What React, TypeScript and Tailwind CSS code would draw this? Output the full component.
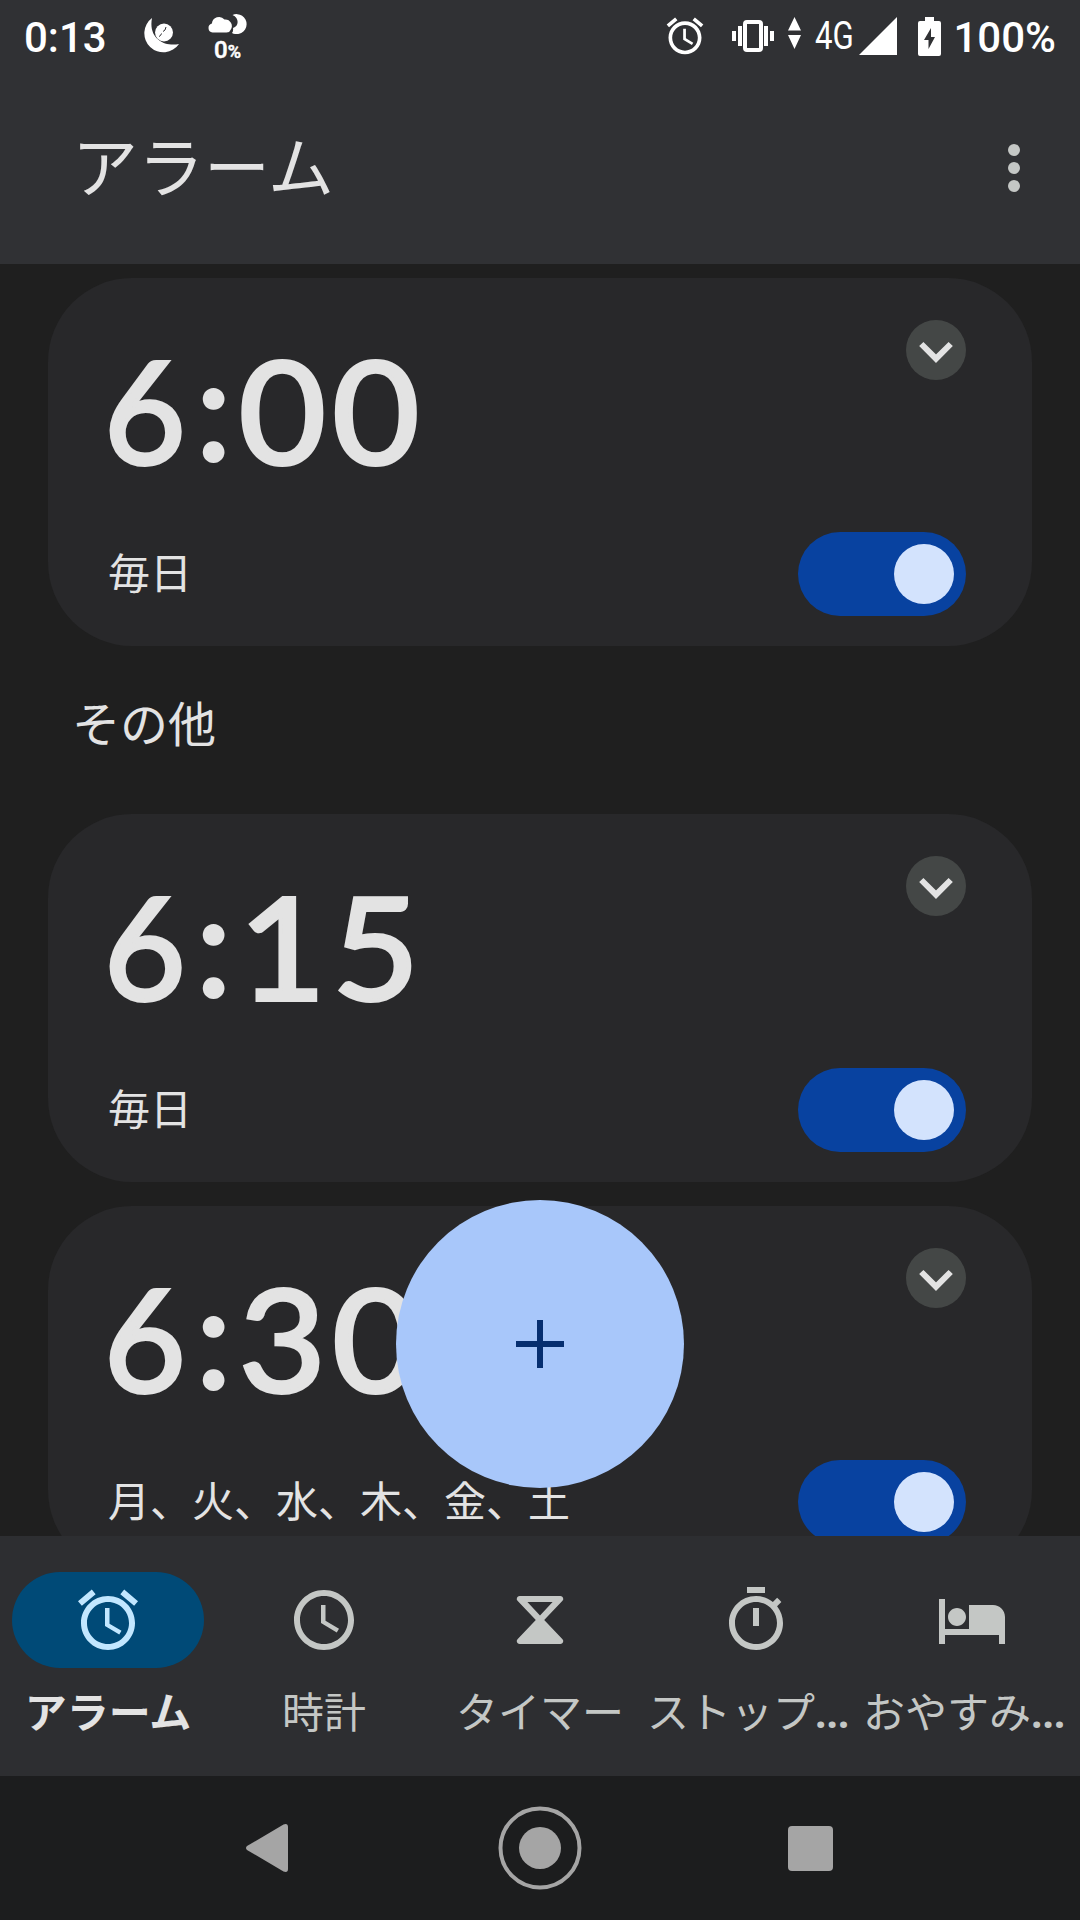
import { useState, type ReactNode } from 'react';

const ALARMS = [
  { id: 1, hour: '6', minute: '00', days: '毎日' },
  { id: 2, hour: '6', minute: '15', days: '毎日' },
  { id: 3, hour: '6', minute: '30', days: '月、火、水、木、金、土' },
];

const TABS: { label: string; clipped?: boolean; icon: ReactNode }[] = [
  {
    label: 'アラーム',
    icon: (
      <path d="M22 5.72l-4.6-3.86-1.29 1.53 4.6 3.86L22 5.72zM7.88 3.39L6.6 1.86 2 5.71l1.29 1.53 4.59-3.85zM12.5 8H11v6l4.75 2.85.75-1.23-4-2.37V8zM12 4c-4.97 0-9 4.03-9 9s4.02 9 9 9c4.97 0 9-4.03 9-9s-4.03-9-9-9zm0 16c-3.87 0-7-3.13-7-7s3.13-7 7-7 7 3.13 7 7-3.13 7-7 7z" />
    ),
  },
  {
    label: '時計',
    icon: (
      <path d="M11.99 2C6.47 2 2 6.48 2 12s4.47 10 9.99 10C17.52 22 22 17.52 22 12S17.52 2 11.99 2zM12 20c-4.42 0-8-3.58-8-8s3.58-8 8-8 8 3.58 8 8-3.58 8-8 8zm.5-13H11v6l5.25 3.15.75-1.23-4.5-2.67z" />
    ),
  },
  {
    label: 'タイマー',
    icon: (
      <path
        fillRule="evenodd"
        d="M5.2 4H18.8a.95.95 0 0 1 .7 1.6L13.4 12l6.1 6.4a.95.95 0 0 1-.7 1.6H5.2a.95.95 0 0 1-.7-1.6L10.6 12 4.5 5.6A.95.95 0 0 1 5.2 4zM7.8 6L12 10.5 16.2 6z"
      />
    ),
  },
  {
    label: 'ストップ',
    clipped: true,
    icon: (
      <path d="M15 1H9v2h6V1zm-4 13h2V8h-2v6zm8.03-6.61l1.42-1.42c-.43-.51-.9-.99-1.41-1.41l-1.42 1.42C16.07 4.74 14.12 4 12 4c-4.97 0-9 4.03-9 9s4.02 9 9 9 9-4.03 9-9c0-2.12-.74-4.07-1.97-5.61zM12 20c-3.87 0-7-3.13-7-7s3.13-7 7-7 7 3.13 7 7-3.13 7-7 7z" />
    ),
  },
  {
    label: 'おやすみ',
    clipped: true,
    icon: (
      <path d="M7 14c1.66 0 3-1.34 3-3S8.66 8 7 8s-3 1.34-3 3 1.34 3 3 3zm12-7h-8v8H3V5H1v15h2v-3h18v3h2v-9c0-2.21-1.79-4-4-4z" />
    ),
  },
];

export default function App() {
  const [activeTab, setActiveTab] = useState(0);

  return (
    <div className="flex h-[1920px] w-[1080px] flex-col overflow-hidden bg-[#1f1f1f] font-[Roboto,'Noto_Sans_CJK_JP',sans-serif] text-[#e3e3e3]">
      <header className="h-[264px] shrink-0 bg-[#303134]">
        <StatusBar />
        <div className="flex h-48 items-center justify-between pl-[72px] pr-9">
          <h1 className="pt-1 text-[66px] leading-none">アラーム</h1>
          <button className="flex w-[60px] flex-col items-center gap-1.5 text-[#c4c7c5]">
            <span className="size-3 rounded-full bg-current" />
            <span className="size-3 rounded-full bg-current" />
            <span className="size-3 rounded-full bg-current" />
          </button>
        </div>
      </header>

      {/* Alarm list, the last card scrolls under the tabs */}
      <main className="relative min-h-0 flex-1 overflow-hidden px-12 pt-3.5">
        <AlarmCard alarm={ALARMS[0]} />
        <h2 className="flex h-[168px] items-center pb-2 pl-6 text-[48px] leading-none">その他</h2>
        <div className="flex flex-col gap-6">
          <AlarmCard alarm={ALARMS[1]} />
          <AlarmCard alarm={ALARMS[2]} />
        </div>

        {/* Add button */}
        <button className="absolute bottom-12 left-1/2 flex size-72 -translate-x-1/2 items-center justify-center rounded-full bg-[#a8c7fa] text-[#062e6f]">
          <svg className="size-12" viewBox="0 0 48 48" stroke="currentColor" strokeWidth="6">
            <path d="M0 24h48M24 0v48" />
          </svg>
        </button>
      </main>

      <nav className="grid h-60 shrink-0 grid-cols-5 bg-[#2d2e31]">
        {TABS.map((tab, index) => (
          <button
            key={tab.label}
            onClick={() => setActiveTab(index)}
            className={`flex flex-col items-center pt-9 ${activeTab === index ? 'font-bold text-[#e3e3e3]' : 'text-[#c4c7c5]'}`}
          >
            <span
              className={`flex h-24 w-48 items-center justify-center rounded-full ${activeTab === index ? 'bg-[#004a77] text-[#c2e7ff]' : ''}`}
            >
              <svg className="size-[72px]" viewBox="0 0 24 24" fill="currentColor">
                {tab.icon}
              </svg>
            </span>
            <span className={`mt-[25px] whitespace-nowrap text-[42px] leading-none ${tab.clipped ? 'mr-4' : ''}`}>
              {tab.label}
              {tab.clipped && <span className="font-['Open_Sans'] text-[40px] font-bold leading-[0]">…</span>}
            </span>
          </button>
        ))}
      </nav>

      <SystemNav />
    </div>
  );
}

function StatusBar() {
  return (
    <div className="flex h-[72px] items-center pl-6 pr-6 text-white">
      <span className="w-[119px] pt-1 text-[42px] font-medium leading-none">0:13</span>
      <svg className="h-9 w-9 shrink-0" viewBox="0 0 36 36">
        <path d="M9 0A19 19 0 1 0 36 26C22 29 5 21 9 0z" fill="currentColor" />
        <circle cx="21" cy="14.5" r="9" fill="currentColor" />
        <path d="M23 9l-1 3-2 1.500M18.500 15.500l-1 2-1.500 1" stroke="#303134" strokeWidth="1" fill="none" />
      </svg>
      <div className="ml-[29px] mt-1 flex w-[39px] flex-col items-center">
        <svg className="h-[20px] w-[39px]" viewBox="0 0 39 20" fill="currentColor">
          <path d="M4.500 18.500a4.600 4.600 0 0 1-.6-9A7.200 7.200 0 0 1 16.500 5.500a6.600 6.600 0 0 1 6 10.500q-.8 2.500-4 2.500z" />
          <path d="M24.500 1A10 10 0 1 1 24 19q1.500-2 1-5C31 12 31.500 4 24.500 1z" />
        </svg>
        <div className="mt-[5px] flex items-baseline text-[24px] font-medium leading-[22px] [-webkit-text-stroke:.5px_currentColor]">
          <span>0</span>
          <span className="text-[18px]">%</span>
        </div>
      </div>

      <div className="ml-auto flex items-center">
        <svg className="size-[44px]" viewBox="0 0 24 24" fill="currentColor">
          {TABS[0].icon}
        </svg>
        {/* Vibrate */}
        <svg className="ml-[25px] h-8 w-[42px]" viewBox="0 0 42 32" fill="currentColor">
          <path d="M0 11h4v10H0zM6 6h4v20H6zM32 6h4v20h-4zM38 11h4v10h-4z" />
          <rect x="13" y="2" width="16" height="28" rx="2" fill="none" stroke="currentColor" strokeWidth="4" />
        </svg>
        <svg className="ml-3.5 mb-1.5 h-8 w-[13px]" viewBox="0 0 13 32" fill="currentColor">
          <path d="M6.500 0L13 13.500H0zM0 18h13L6.500 32z" />
        </svg>
        <span className="ml-3.5 w-[44px] origin-left scale-x-[.82] text-[38px] leading-none">4G</span>
        <svg className="size-[38px]" viewBox="0 0 38 38" fill="currentColor">
          <path d="M38 0v38H0z" />
        </svg>
        <svg className="ml-[21px] h-[39px] w-[23px]" viewBox="0 0 23 39">
          <path d="M7 0h9v4h5a2 2 0 0 1 2 2v31a2 2 0 0 1-2 2H2a2 2 0 0 1-2-2V6a2 2 0 0 1 2-2h5z" fill="currentColor" />
          <path d="M13 11L6 23h4.500v9L17 20h-4z" fill="#303134" />
        </svg>
        <span className="ml-3 pt-1 text-[42px] font-medium leading-none">100%</span>
      </div>
    </div>
  );
}

function AlarmCard({ alarm }: { alarm: (typeof ALARMS)[number] }) {
  const [enabled, setEnabled] = useState(true);

  return (
    <section className="flex h-[368px] flex-col justify-between rounded-[84px] bg-[#28282a] pb-[30px] pl-[60px] pr-[66px] pt-[42px]">
      <div className="flex items-start justify-between">
        <div className="-ml-1 mt-[18px] flex font-[Lato,sans-serif] text-[141px] leading-[144px] [-webkit-text-stroke:4px_currentColor]">
          <span className="w-[82px]">{alarm.hour}</span>
          <span className="-mt-1 w-[53px] pl-0.5 text-center">:</span>
          <span className="origin-left scale-x-[1.06] tracking-[6.5px]">{alarm.minute}</span>
        </div>
        <button className="size-[60px] rounded-full bg-[#444746]">
          <svg viewBox="0 0 60 60" fill="none" stroke="currentColor" strokeWidth="6">
            <path d="M15.300 24L30 38.700 44.700 24" />
          </svg>
        </button>
      </div>
      <div className="flex items-center justify-between">
        <span className="pt-0.5 text-[42px] leading-none">{alarm.days}</span>
        <button
          role="switch"
          aria-checked={enabled}
          onClick={() => setEnabled(!enabled)}
          className={`flex h-[84px] w-[168px] items-center rounded-full px-3 ${enabled ? 'justify-end bg-[#0842a0]' : 'bg-[#444746]'}`}
        >
          <span className="size-[60px] rounded-full bg-[#d3e3fd]" />
        </button>
      </div>
    </section>
  );
}

function SystemNav() {
  return (
    <div className="flex h-36 shrink-0 items-center bg-[#1c1d1e] pl-[246px] text-[#a5a5a5]">
      <svg className="h-12 w-[42px]" viewBox="0 0 42 48" fill="currentColor">
        <path d="M1 22L37.500.5Q42-1 42 3v42q0 4-4.500 2.500L1 26q-2-2 0-4z" />
      </svg>
      <svg className="ml-[210px] size-[84px]" viewBox="0 0 84 84">
        <circle cx="42" cy="42" r="39.500" fill="none" stroke="currentColor" strokeWidth="4" />
        <circle cx="42" cy="42" r="21" fill="currentColor" />
      </svg>
      <span className="ml-[205.5px] size-[45px] rounded bg-current" />
    </div>
  );
}
